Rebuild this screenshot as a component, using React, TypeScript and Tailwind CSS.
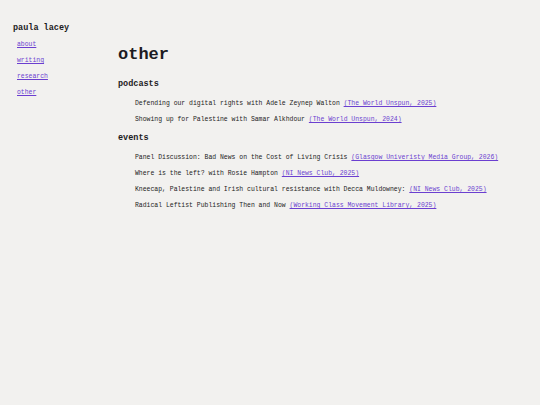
const nav = ['about', 'writing', 'research', 'other'];

const podcasts = [
  { title: 'Defending our digital rights with Adele Zeynep Walton', source: '(The World Unspun, 2025)' },
  { title: 'Showing up for Palestine with Samar Alkhdour', source: '(The World Unspun, 2024)' },
];

const events = [
  { title: 'Panel Discussion: Bad News on the Cost of Living Crisis', source: '(Glasgow Univeristy Media Group, 2026)' },
  { title: 'Where is the left? with Rosie Hampton', source: '(NI News Club, 2025)' },
  { title: 'Kneecap, Palestine and Irish cultural resistance with Decca Muldowney:', source: '(NI News Club, 2025)' },
  { title: 'Radical Leftist Publishing Then and Now', source: '(Working Class Movement Library, 2025)' },
];

function Section({ title, items }: { title: string; items: { title: string; source: string }[] }) {
  return (
    <div className="mt-[13px]">
      <h2 className="text-[8.5px] leading-[12px] font-bold">{title}</h2>
      <ul className="mt-[6px] pl-[17px]">
        {items.map((it) => (
          <li key={it.title} className="text-[6.45px] leading-[16px] whitespace-nowrap">
            {it.title}{' '}
            <a href="#" className="text-[#6b3fd0] underline">{it.source}</a>
          </li>
        ))}
      </ul>
    </div>
  );
}

export default function App() {
  return (
    <div className="min-h-[405px] bg-[#f2f1ef] text-[#1c1b22] flex" style={{ fontFamily: '"Liberation Mono", "DejaVu Sans Mono", monospace' }}>
      <aside className="w-[118px] pl-[13px] pt-[22px] shrink-0">
        <div className="text-[8.5px] leading-[12px] font-bold">paula lacey</div>
        <ul className="mt-[3px] pl-[4px]">
          {nav.map((n) => (
            <li key={n} className="text-[6.45px] leading-[16px]">
              <a href="#" className="text-[#6b3fd0] underline">{n}</a>
            </li>
          ))}
        </ul>
      </aside>
      <main className="pt-[45px]">
        <h1 className="text-[17px] leading-[20px] font-bold">other</h1>
        <Section title="podcasts" items={podcasts} />
        <div className="-mt-[9px]">
          <Section title="events" items={events} />
        </div>
      </main>
    </div>
  );
}
